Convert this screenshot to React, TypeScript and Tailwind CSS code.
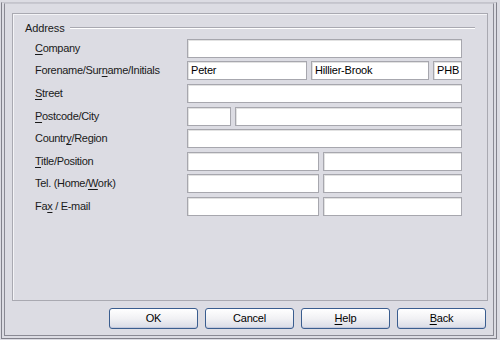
import React from 'react';

const font = { fontFamily: '"Liberation Sans", Arial, sans-serif' };

function Mn({ children }: { children: React.ReactNode }) {
  return <span className="underline underline-offset-[2px]">{children}</span>;
}

function Field({ value = '', className = '' }: { value?: string; className?: string }) {
  return (
    <div
      className={`h-[19px] border border-[#a7a7ae] bg-white shadow-[inset_1px_1px_0_#e2e2e2] pl-[3px] text-[11px] leading-[17px] tracking-[-0.2px] text-black ${className}`}
    >
      {value}
    </div>
  );
}

function Row({
  label,
  mt,
  children,
}: {
  label: React.ReactNode;
  mt: string;
  children: React.ReactNode;
}) {
  return (
    <div className={`flex items-center ${mt}`}>
      <div className="w-[152px] text-[11px] leading-[19px] tracking-[-0.3px] text-[#1a1a1a]">{label}</div>
      <div className="flex w-[275px] gap-[4px]">{children}</div>
    </div>
  );
}

function Btn({ children }: { children: React.ReactNode }) {
  return (
    <div className="flex h-[21px] w-[89px] items-center justify-center rounded-[3px] border border-[#3a5d8f] bg-gradient-to-b from-[#ffffff] via-[#f1f1f4] to-[#d9dbe6] text-[11px] tracking-[-0.2px] text-black shadow-[inset_0_-1px_0_#c4c9dc]">
      {children}
    </div>
  );
}

export default function App() {
  return (
    <div className="h-[340px] w-[500px] bg-[#dcdce3] pl-[1px] pt-[2px] pr-[3px] pb-[1px]" style={font}>
      <div className="h-full border-l border-b border-r border-t border-[#82828c] border-t-[#c4c4cc] pl-[2px] pb-[2px] pr-[2px]">
        <div className="flex h-full flex-col border-l border-b border-r border-[#8a8a94] border-t border-t-[#c8c8d0]">
          <div className="ml-[7px] mt-[9px] h-[288px] w-[476px] border border-[#a9a9b1] shadow-[inset_1px_1px_0_#f4f4f7]">
            <div className="flex items-center pl-[12px] pt-[7px]">
              <span className="text-[11px] leading-[14px] tracking-[-0.1px] text-[#1a1a1a]">Address</span>
              <div className="ml-[5px] mr-[12px] h-[2px] flex-1 border-t border-[#a9a9b1] border-b border-b-white" />
            </div>
            <div className="pl-[22px] pt-[2px]">
              <Row label={<><Mn>C</Mn>ompany</>} mt="mt-[2px]">
                <Field className="flex-1" />
              </Row>
              <Row label={<>Forename/Sur<Mn>n</Mn>ame/Initials</>} mt="mt-[3px]">
                <Field className="w-[120px]" value="Peter" />
                <Field className="w-[118px]" value="Hillier-Brook" />
                <Field className="flex-1" value="PHB" />
              </Row>
              <Row label={<><Mn>S</Mn>treet</>} mt="mt-[4px]">
                <Field className="flex-1" />
              </Row>
              <Row label={<><Mn>P</Mn>ostcode/City</>} mt="mt-[4px]">
                <Field className="w-[44px]" />
                <Field className="flex-1" />
              </Row>
              <Row label={<>Countr<Mn>y</Mn>/Region</>} mt="mt-[3px]">
                <Field className="flex-1" />
              </Row>
              <Row label={<><Mn>T</Mn>itle/Position</>} mt="mt-[4px]">
                <Field className="w-[132px]" />
                <Field className="flex-1" />
              </Row>
              <Row label={<>Tel. (Home/<Mn>W</Mn>ork)</>} mt="mt-[3px]">
                <Field className="w-[132px]" />
                <Field className="flex-1" />
              </Row>
              <Row label={<>Fa<Mn>x</Mn> / E-mail</>} mt="mt-[4px]">
                <Field className="w-[132px]" />
                <Field className="flex-1" />
              </Row>
            </div>
          </div>
          <div className="ml-[104px] mt-[7px] flex gap-[7px]">
            <Btn>OK</Btn>
            <Btn>Cancel</Btn>
            <Btn><span><Mn>H</Mn>elp</span></Btn>
            <Btn><span><Mn>B</Mn>ack</span></Btn>
          </div>
        </div>
      </div>
    </div>
  );
}
